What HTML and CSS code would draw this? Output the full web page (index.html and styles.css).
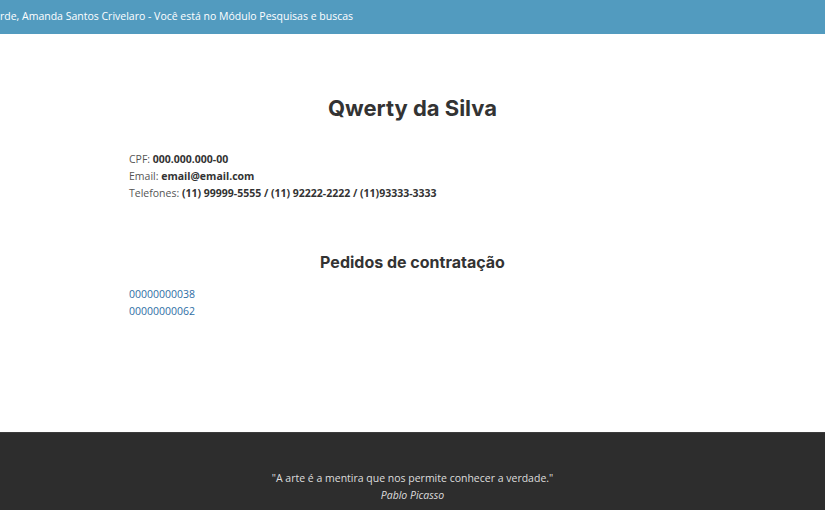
FILE: index.html
```html
<!DOCTYPE html>
<html lang="pt-BR">
<head>
<meta charset="utf-8">
<title>Qwerty da Silva</title>
<link rel="stylesheet" href="styles.css">
</head>
<body>
<header class="topbar">
  <span class="greeting">rde, Amanda Santos Crivelaro - Você está no Módulo Pesquisas e buscas</span>
</header>
<main class="content">
  <h1 class="name">Qwerty da Silva</h1>
  <div class="info">
    <div>CPF: <strong>000.000.000-00</strong></div>
    <div>Email: <strong>email@email.com</strong></div>
    <div>Telefones: <strong>(11) 99999-5555 / (11) 92222-2222 / (11)93333-3333</strong></div>
  </div>
  <h2 class="section-title">Pedidos de contratação</h2>
  <div class="orders">
    <a href="#">00000000038</a>
    <a href="#">00000000062</a>
  </div>
</main>
<footer class="footer">
  <p class="quote">"A arte é a mentira que nos permite conhecer a verdade."</p>
  <p class="author">Pablo Picasso</p>
</footer>
</body>
</html>
```

FILE: styles.css
```css
* { box-sizing: border-box; }
html, body { margin: 0; padding: 0; }
body {
  font-family: "Open Sans", "Liberation Sans", sans-serif;
  font-size: 10.5px;
  line-height: 17px;
  color: #555;
  background: #fff;
  width: 825px;
  height: 510px;
  overflow: hidden;
  display: flex;
  flex-direction: column;
}
.topbar {
  height: 34px;
  background: #529bbf;
  color: #fff;
  display: flex;
  align-items: center;
  white-space: nowrap;
  padding-bottom: 2px;
}
.content {
  height: 398px;
  padding: 0 129px;
}
.name {
  margin: 60px 0 0;
  text-align: center;
  font-family: Inter, "DejaVu Sans", sans-serif;
  font-weight: 700;
  font-size: 22px;
  line-height: 28px;
  color: #333;
}
.info {
  margin-top: 29px;
}
.info strong { color: #333; font-weight: 700; }
.section-title {
  margin: 49px 0 0;
  text-align: center;
  font-family: Inter, "DejaVu Sans", sans-serif;
  font-weight: 700;
  font-size: 16px;
  line-height: 22px;
  color: #333;
}
.orders {
  margin-top: 13px;
  display: flex;
  flex-direction: column;
}
.orders a {
  color: #2f6ea5;
  text-decoration: none;
}
.footer {
  flex: 1;
  background: #2d2d2d;
  border-top: 1px solid #3c3c3c;
  color: #ddd;
  text-align: center;
  padding-top: 37px;
}
.footer p { margin: 0; }
.author { font-style: italic; }
```
